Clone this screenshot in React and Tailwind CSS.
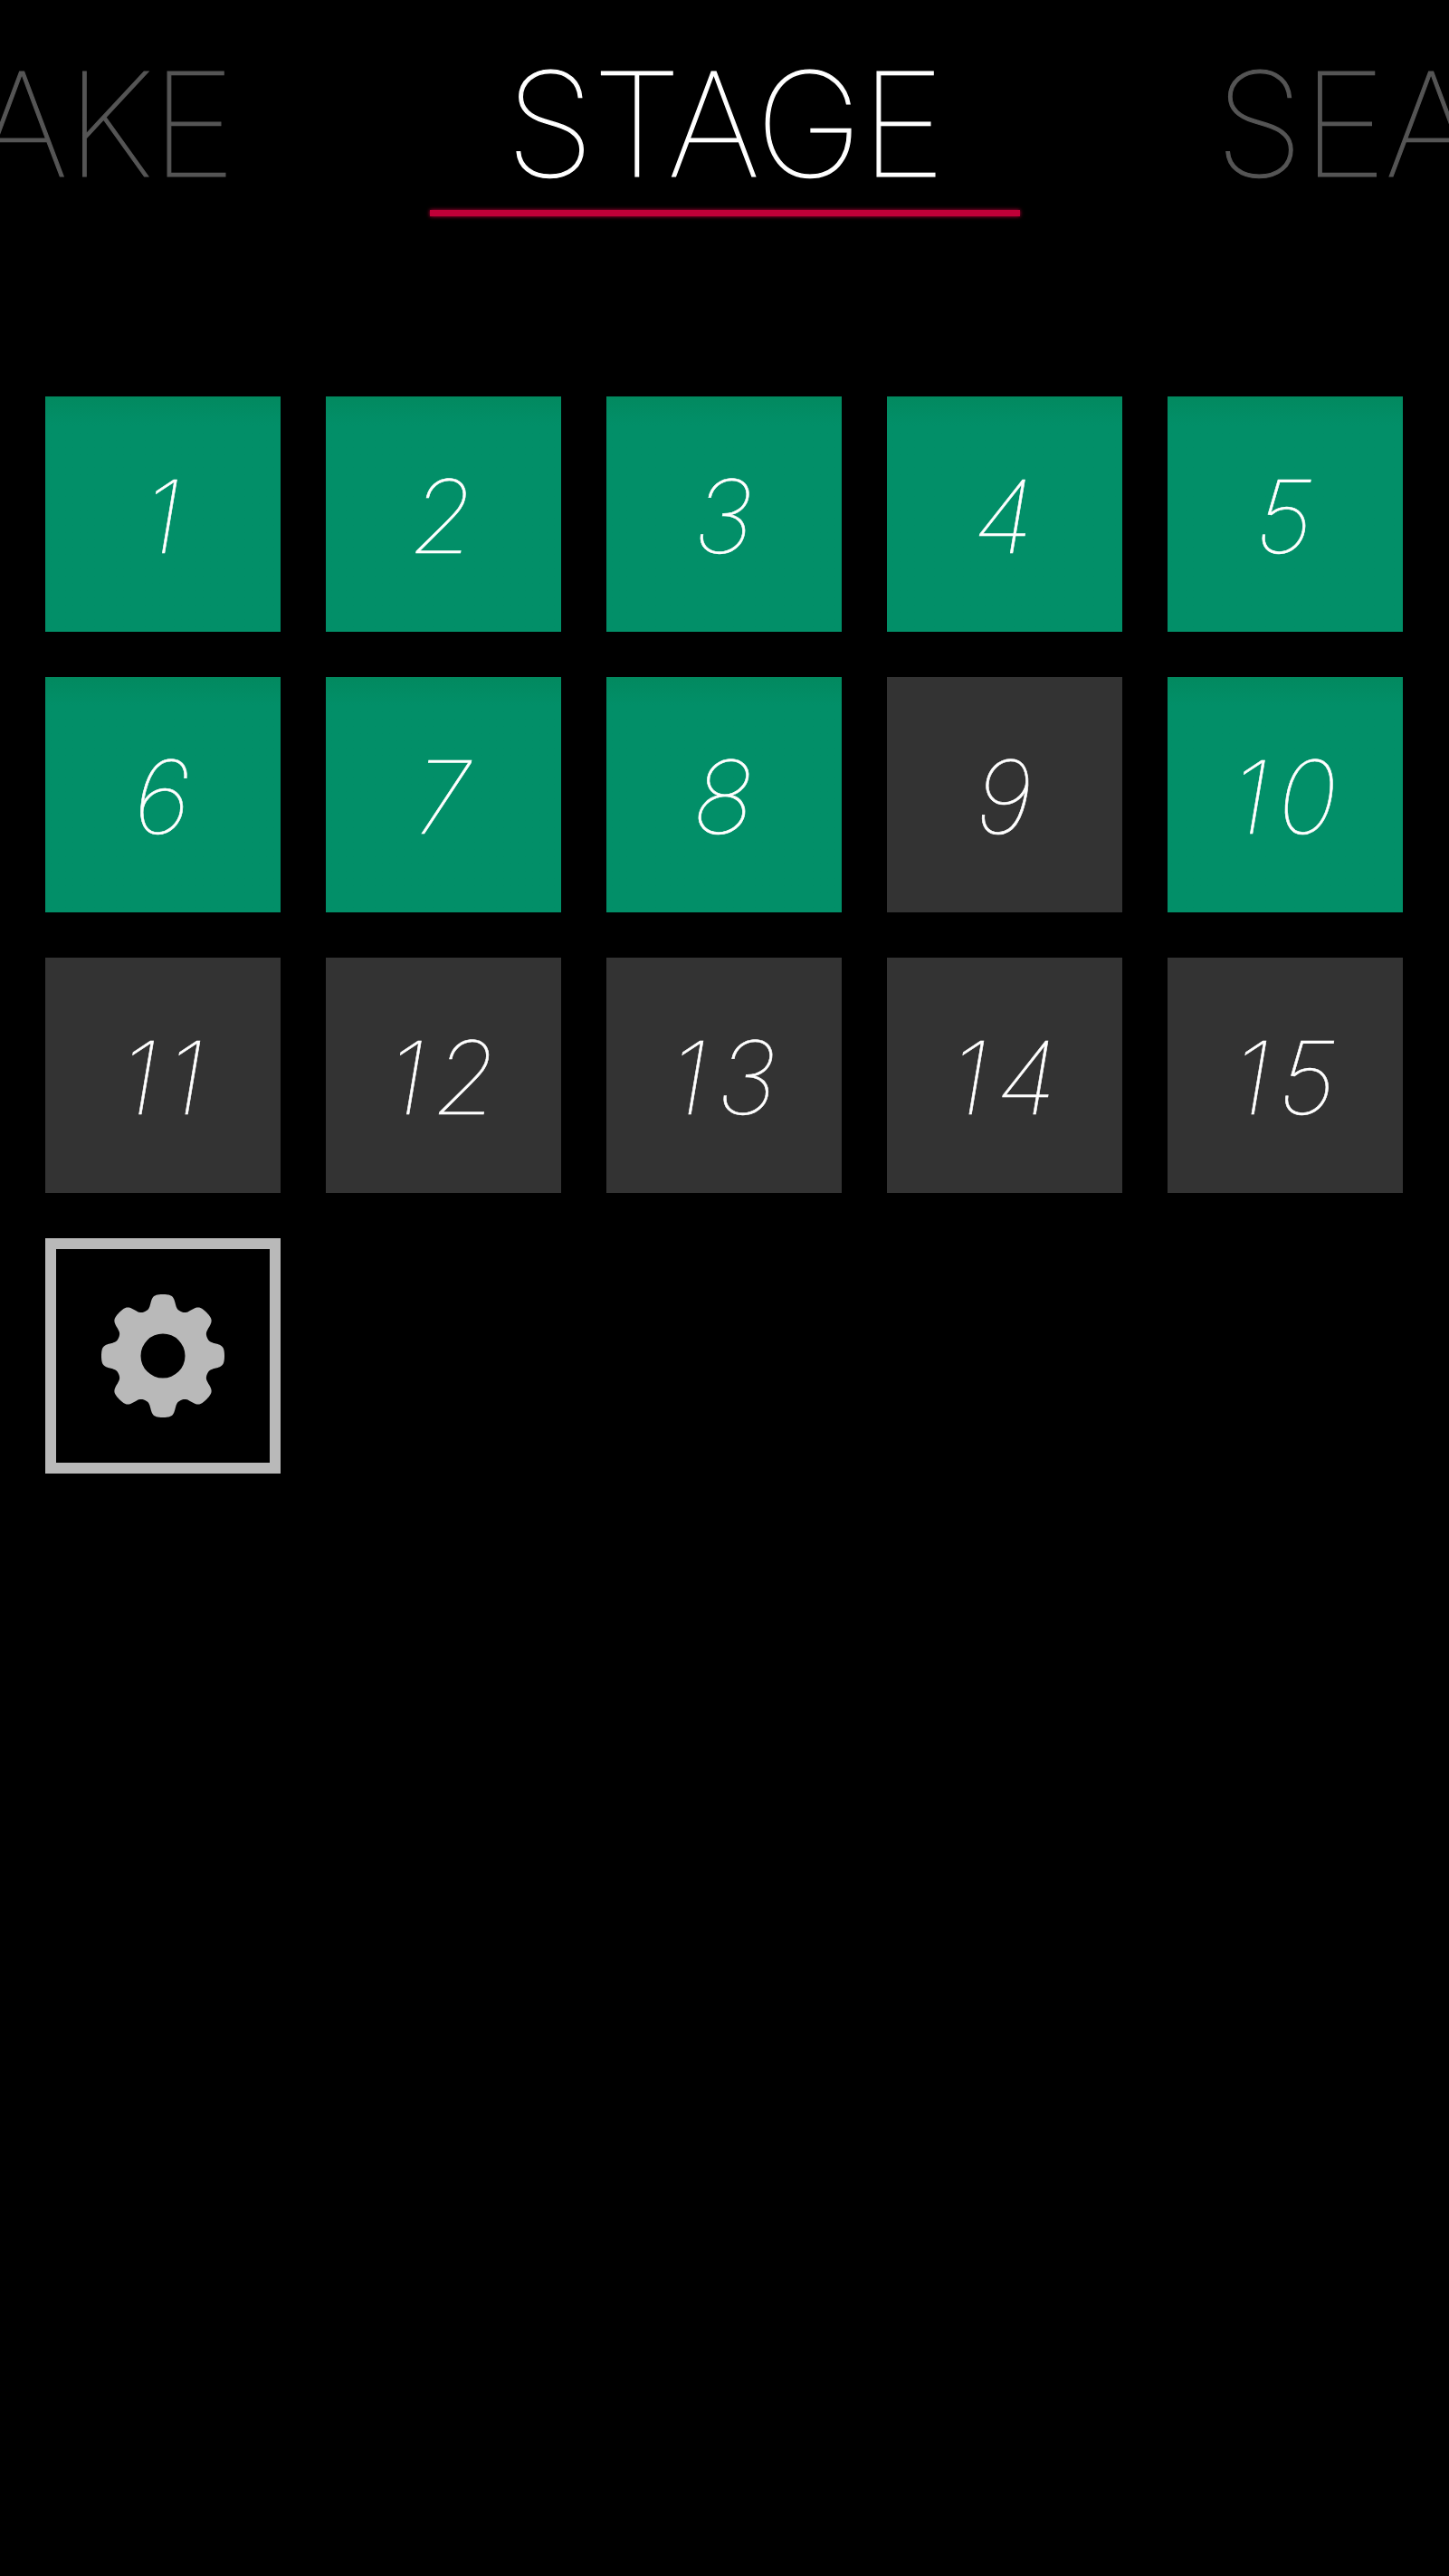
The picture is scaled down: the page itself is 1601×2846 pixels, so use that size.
const gearPath = (() => {
  const cx = 100, cy = 100, pts = [];
  for (let i = 0; i < 720; i++) {
    const t = (i / 720) * Math.PI * 2;
    const c = Math.cos(8 * t) + 0.25;
    const r = 60 + 8 * (Math.tanh(1.8 * c) / Math.tanh(1.8 * 1.25));
    pts.push(`${(cx + r * Math.sin(t)).toFixed(2)} ${(cy - r * Math.cos(t)).toFixed(2)}`);
  }
  return `M${pts.join("L")}Z M${cx + 24.5} ${cy}A24.5 24.5 0 1 0 ${cx - 24.5} ${cy}A24.5 24.5 0 1 0 ${cx + 24.5} ${cy}Z`;
})();

function Gear() {
  return (
    <svg width="200" height="200" viewBox="0 0 200 200" aria-hidden="true">
      <path d={gearPath} fill="#b9b9b9" fillRule="evenodd" />
    </svg>
  );
}

const active = new Set([1, 2, 3, 4, 5, 6, 7, 8, 10]);

export default function App() {
  return (
    <div className="h-[2846px] w-full overflow-hidden bg-black font-['Inter','Liberation_Sans',sans-serif]">
      <header className="grid grid-cols-[minmax(0,1fr)_652px_minmax(0,1fr)] pt-[52px]">
        <div className="flex justify-end overflow-hidden pr-[216px] text-[160px] font-thin leading-[170px] tracking-[-2px] text-[#555555] [-webkit-text-stroke:1.2px_currentColor]">
          <span className="shrink-0">LAKE</span>
        </div>
        <div className="text-center text-[160px] font-thin leading-[170px] tracking-[-2px] text-white [-webkit-text-stroke:1.2px_currentColor]">
          <div>STAGE</div>
          <div className="mt-[10px] h-[7px] bg-[#c00038] shadow-[0_0_4px_#c00038]" />
        </div>
        <div className="flex justify-start overflow-hidden pl-[216px] text-[160px] font-thin leading-[170px] tracking-[-2px] text-[#555555] [-webkit-text-stroke:1.2px_currentColor]">
          <span className="shrink-0">SEA</span>
        </div>
      </header>
      <main className="mt-[199px] grid w-[1550px] grid-cols-[repeat(5,260px)] gap-[50px] pl-[50px]">
        {Array.from({ length: 15 }, (_, i) => i + 1).map((n) => (
          <div
            key={n}
            className={`flex h-[260px] items-center justify-center pl-[8px] pt-[4px] text-[112px] font-thin italic leading-none tracking-[10px] text-white [-webkit-text-stroke:0.6px_currentColor] ${active.has(n) ? "bg-linear-to-b from-[#02895f] to-[#028f68] to-[12%]" : "bg-[#333333]"}`}
          >
            {n}
          </div>
        ))}
        <div className="flex h-[260px] items-center justify-center border-[12px] border-[#b9b9b9]">
          <Gear />
        </div>
      </main>
    </div>
  );
}
